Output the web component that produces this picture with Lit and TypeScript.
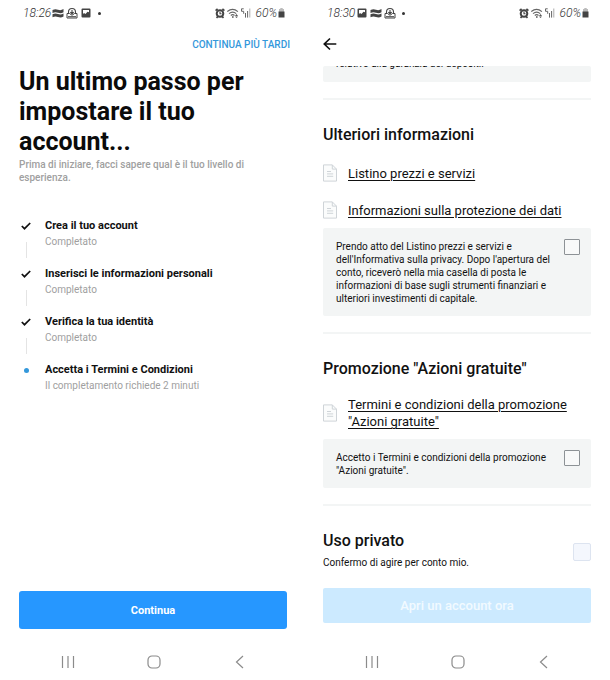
import { LitElement, html, css, svg, nothing } from "lit";
import { customElement, property } from "lit/decorators.js";

const flag = svg`<svg class="glyph" viewBox="0 0 12 12"><path d="M.5 3q2.800-1.500 5.500-.3t5.500-.6v3.200q-2.700 1.500-5.500.4T.5 6zM.5 7.300q2.800-1.500 5.500-.3t5.500-.6v3.200q-2.700 1.500-5.500.4t-5.500.3z" fill="#444"/></svg>`;
const dome = svg`<svg class="glyph" viewBox="0 0 12 12"><path d="M2.500 6.500V5a3.500 3.500 0 0 1 7 0v1.500" fill="none" stroke="#444" stroke-width="1.100"/><path d="M6 3v4M4.300 5L6 6.900 7.700 5" fill="none" stroke="#444" stroke-width="1.100"/><path d="M1 6.500h2.500L6 8.300l2.500-1.800H11v4.500H1z" fill="#fff" stroke="#444"/><path d="M2 9h8v1.300H2z" fill="#666"/></svg>`;
const photo = svg`<svg class="glyph" viewBox="0 0 12 12"><path d="M2.500 1.500h7a1 1 0 0 1 1 1v7a1 1 0 0 1-1 1h-7a1 1 0 0 1-1-1v-7a1 1 0 0 1 1-1z" fill="#444"/><path d="M3 3h6v2.200L7.500 4.800 5.500 7 4 6 3 7z" fill="#fff"/></svg>`;
const alarm = svg`<svg class="glyph" viewBox="0 0 12 12"><circle cx="6" cy="6.500" r="3.300" fill="#fff" stroke="#444" stroke-width="2"/><path d="M1.600 3.600l2-1.800M10.400 3.600l-2-1.800M2.500 10.800l1.500-1.500M9.500 10.800L8 9.300" stroke="#444" stroke-width="1.700"/><path d="M6 4.800v2h1.500" fill="none" stroke="#444" stroke-width="1.100"/></svg>`;
const wifi = svg`<svg class="glyph" viewBox="0 0 12 12"><path d="M.3 4.600q5.200-4.600 10.600 0M2 6.600q3.700-3 7.200 0M3.800 8.500q1.900-1.600 3.700 0" fill="none" stroke="#666" stroke-width="1.200"/><path d="M5 9.200h1.600v1.500H5zM9.500 7l1.500 2H8zM8 9.500h3L9.500 11z" fill="#555"/></svg>`;
const signal = svg`<svg class="glyph" viewBox="0 0 12 12"><path d="M3.700 1.800H1.500v2.500h2.200v2.500M5.500 6v4.600M7.600 4v6.600" fill="none" stroke="#666"/><path d="M9.800 1.500v9" stroke="#aaa"/></svg>`;
const battery = svg`<svg class="battery" viewBox="0 0 7 10"><path d="M2.300 0h2.400v1H6v3H1V1h1.300z" fill="#bbb"/><path d="M.5 3.500h6v6h-6z" fill="#444"/></svg>`;
const check = svg`<svg class="check" viewBox="0 0 10 8"><path d="M.8 4L3.500 6.700 9.200 1" fill="none" stroke="#111" stroke-width="1.700"/></svg>`;
const doc = svg`<svg class="doc" viewBox="0 0 14 18"><path d="M.5.9h8.800l4.200 4.200v12H.5z" fill="#fbfcfc" stroke="#cfd4d8"/><path d="M9.300.9v4.200h4.200M4 7.500h4M4 9.900h6.200M4 12.300h6.200" fill="none" stroke="#cfd4d8"/></svg>`;
const arrow = svg`<svg class="arrow" viewBox="0 0 14 14"><path d="M13.300 7H1.500M7 1.500L1.300 7 7 12.500" fill="none" stroke="#111" stroke-width="1.700"/></svg>`;

@customElement("status-bar")
export class StatusBar extends LitElement {
  @property() time = "";
  @property({ type: Boolean }) photoFirst = false;
  static styles = css`
    :host { display: flex; align-items: center; height: 26px; padding: 0 2px 0 4px;
      font: italic 300 12px/16px Roboto, sans-serif; color: #333; }
    .group { display: flex; align-items: center; gap: 1px; }
    .icons { margin-left: 1px; gap: 2px; }
    .end { margin-left: auto; }
    .glyph { width: 12px; height: 12px; }
    .battery { width: 7px; height: 10px; }
    .dot { width: 3px; height: 3px; margin-left: 4px; border-radius: 50%; background: #333; }
    .level { margin-left: 2px; }
  `;
  render() {
    return html`
      <span>${this.time}</span>
      <span class="group icons">
        ${this.photoFirst ? [photo, flag, dome] : [flag, dome, photo]}
        <span class="dot"></span>
      </span>
      <span class="group end">${alarm}${wifi}${signal}<span class="level">60%</span>${battery}</span>
    `;
  }
}

@customElement("nav-bar")
export class NavBar extends LitElement {
  static styles = css`
    :host { display: flex; justify-content: space-between; align-items: center;
      height: 37px; padding: 0 39px 0 41px; }
    button { display: flex; padding: 0; border: 0; background: none; }
    svg { width: 16px; height: 16px; fill: none; stroke: #8b8b8b; stroke-width: 1.200; }
  `;
  render() {
    return html`
      <button aria-label="Recenti"><svg viewBox="0 0 16 16"><path d="M2.500 2v12M8 2v12M13.500 2v12" /></svg></button>
      <button aria-label="Home"><svg viewBox="0 0 16 16"><rect x="2" y="2" width="12" height="12" rx="4" /></svg></button>
      <button aria-label="Indietro"><svg viewBox="0 0 16 16"><path d="M11 2L4.500 8l6.500 6" /></svg></button>
    `;
  }
}

const steps = [
  { title: "Crea il tuo account", note: "Completato", done: true },
  { title: "Inserisci le informazioni personali", note: "Completato", done: true },
  { title: "Verifica la tua identità", note: "Completato", done: true },
  { title: "Accetta i Termini e Condizioni", note: "Il completamento richiede 2 minuti", done: false },
];

@customElement("app-root")
export class AppRoot extends LitElement {
  static styles = css`
    :host { display: grid; grid-template-columns: 1fr 1fr; min-height: 100vh; background: #fff;
      color: #111; font-family: Roboto, "Liberation Sans", sans-serif; }
    * { box-sizing: border-box; }
    .phone { display: flex; flex-direction: column; min-width: 0; padding: 0 18px 0 19px; }
    .phone.terms { padding: 0 19px 0 18px; }
    h1, h2, p, ol { margin: 0; padding: 0; }
    a { color: inherit; }
    button { font-family: inherit; border: 0; padding: 0; }

    .topbar { display: flex; align-items: center; height: 40px; flex: none; }
    .later { margin: 0 -3px 3px auto; font-size: 10px; line-height: 16px; font-weight: 500; color: #3498db; text-decoration: none; }
    h1 { margin-top: 1px; font-size: 25px; line-height: 30px; font-weight: 700; color: #0b0b0b; }
    .lead { margin-top: 1px; font-size: 10px; line-height: 13px; font-weight: 500; color: #a0a0a0; }
    .steps { list-style: none; margin-top: 34px; margin-bottom: 32px; }
    .step { display: grid; grid-template-columns: 14px 1fr; column-gap: 12px; height: 48px; }
    .rail { display: flex; flex-direction: column; align-items: center; }
    .mark { display: flex; align-items: center; height: 16px; }
    .check { width: 10px; height: 8px; }
    .bullet { width: 5px; height: 5px; border-radius: 50%; background: #3498db; }
    .line { width: 1px; height: 16px; margin-top: 8px; background: #e4e4e4; }
    .name { font-size: 11px; line-height: 16px; font-weight: 700; }
    .note { font-size: 10px; line-height: 16px; color: #a0a0a0; }
    .primary { height: 38px; margin-top: auto; border-radius: 3px; background: #2697ff; color: #fff; font-size: 11px; font-weight: 700; }
    .phone > nav-bar { margin-top: 14px; }

    .back { display: flex; margin-bottom: 5px; background: none; }
    .arrow { width: 14px; height: 14px; }
    .card { display: flex; justify-content: space-between; gap: 8px; padding: 10px 11px 11px 13px;
      background: #f3f5f5; border-radius: 2px; font-size: 10px; line-height: 13px; }
    .card > span { padding-top: 2px; }
    .card.cut { height: 16px; padding-top: 0; padding-bottom: 0; align-items: flex-end; overflow: hidden; }
    .card.cut > span { padding-bottom: 12px; }
    hr { width: 100%; height: 2px; margin: 16px 0 24px; border: 0; background: #f3f5f5; }
    h2 { font-size: 16px; line-height: 22px; font-weight: 500; }
    .file { display: flex; align-items: center; gap: 11px; padding: 10px 0 9px; font-size: 13px; line-height: 17px; }
    .files { padding-top: 8px; }
    .files.single { padding-top: 6px; }
    a.ref { text-underline-offset: 2px; text-decoration-thickness: 1px; }
    .doc { flex: none; width: 14px; height: 18px; }
    input { appearance: none; flex: none; width: 16px; height: 16px; margin: 1px 0 0; border: 1px solid #8d9296; border-radius: 1px; background: #f8f9f9; }
    .private { display: flex; justify-content: space-between; align-items: center; }
    .private p { font-size: 10px; line-height: 22px; }
    .private input { width: 18px; height: 18px; margin: 0; border-color: #dde4f0; border-radius: 2px; background: #f4f7fd; }
    .open { height: 35px; margin-top: 14px; border-radius: 2px; background: #cceaff; color: #f2faff; font-size: 13px; font-weight: 500; }
    .terms > nav-bar { margin-top: auto; }
  `;

  private step(s: (typeof steps)[number], last: boolean) {
    return html`
      <li class="step">
        <div class="rail">
          <span class="mark">${s.done ? check : html`<span class="bullet"></span>`}</span>
          ${last ? nothing : html`<span class="line"></span>`}
        </div>
        <div>
          <p class="name">${s.title}</p>
          <p class="note">${s.note}</p>
        </div>
      </li>
    `;
  }

  render() {
    return html`
      <section class="phone">
        <status-bar time="18:26"></status-bar>
        <div class="topbar"><a class="later" href="#">CONTINUA PIÙ TARDI</a></div>
        <h1>Un ultimo passo per<br />impostare il tuo<br />account...</h1>
        <p class="lead">Prima di iniziare, facci sapere qual è il tuo livello di<br />esperienza.</p>
        <ol class="steps">${steps.map((s, i) => this.step(s, i === steps.length - 1))}</ol>
        <button class="primary">Continua</button>
        <nav-bar></nav-bar>
      </section>
      <section class="phone terms">
        <status-bar time="18:30" .photoFirst=${true}></status-bar>
        <div class="topbar"><button class="back" aria-label="Torna indietro">${arrow}</button></div>
        <div class="card cut"><span>relativo alla garanzia dei depositi.</span></div>
        <hr />
        <h2>Ulteriori informazioni</h2>
        <div class="files">
          <div class="file">${doc}<a class="ref" href="#">Listino prezzi e servizi</a></div>
          <div class="file">${doc}<a class="ref" href="#">Informazioni sulla protezione dei dati</a></div>
        </div>
        <label class="card">
          <span>Prendo atto del Listino prezzi e servizi e<br />dell'Informativa sulla privacy. Dopo l'apertura del<br />conto, riceverò nella mia casella di posta le<br />informazioni di base sugli strumenti finanziari e<br />ulteriori investimenti di capitale.</span>
          <input type="checkbox" />
        </label>
        <hr />
        <h2>Promozione "Azioni gratuite"</h2>
        <div class="files single">
          <div class="file">${doc}<a class="ref" href="#">Termini e condizioni della promozione<br />"Azioni gratuite"</a></div>
        </div>
        <label class="card">
          <span>Accetto i Termini e condizioni della promozione<br />"Azioni gratuite".</span>
          <input type="checkbox" />
        </label>
        <hr />
        <label class="private">
          <div><h2>Uso privato</h2><p>Confermo di agire per conto mio.</p></div>
          <input type="checkbox" />
        </label>
        <button class="open">Apri un account ora</button>
        <nav-bar></nav-bar>
      </section>
    `;
  }
}
